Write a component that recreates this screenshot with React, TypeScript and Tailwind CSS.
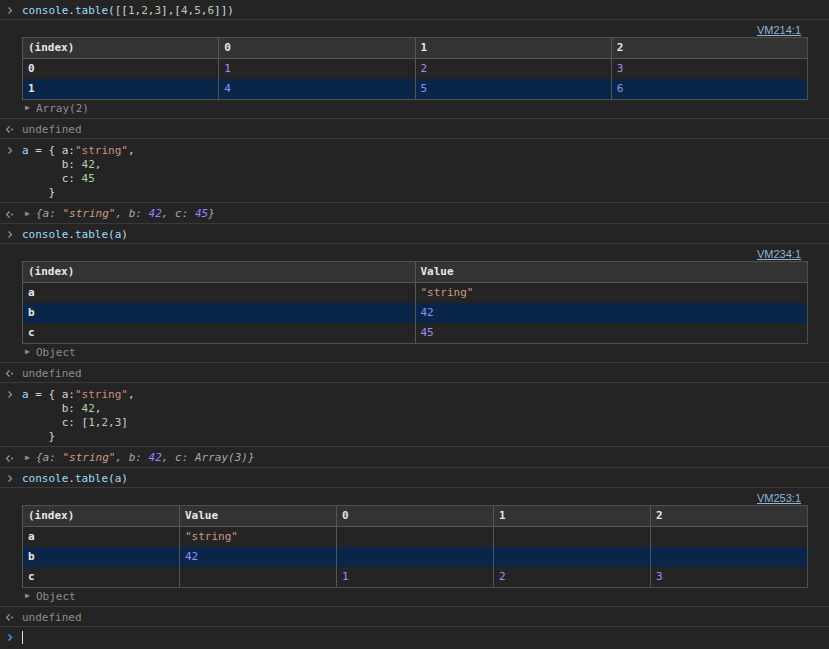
import React from 'react';

const MONO = 'font-["DejaVu_Sans_Mono","Liberation_Mono",monospace]';

// Colours picked off the console screenshot
const C = {
  variable: 'text-[#9cdcfe]',
  plain: 'text-[#d4d4d4]',
  str: 'text-[#ce9178]',
  num: 'text-[#b5cea8]',
  outNum: 'text-[#9d8cf5]',
  outStr: 'text-[#c99a80]',
  key: 'text-[#a8a8a8]',
  muted: 'text-[#8c8c8c]',
};

function InputIcon({ active = false }: { active?: boolean }) {
  return (
    <svg width="22" height="15" viewBox="0 0 22 15" className="shrink-0">
      <path
        d="M8.5 4.5 L11.5 7.5 L8.5 10.5"
        fill="none"
        stroke={active ? '#4a8fe0' : '#9a9a9a'}
        strokeWidth={active ? 1.6 : 1.1}
      />
    </svg>
  );
}

function ResultIcon() {
  return (
    <svg width="22" height="15" viewBox="0 0 22 15" className="shrink-0">
      <path d="M9.5 4.5 L6.5 7.5 L9.5 10.5" fill="none" stroke="#9a9a9a" strokeWidth="1.1" />
      <circle cx="12" cy="7.5" r="0.9" fill="#9a9a9a" />
    </svg>
  );
}

function Entry({
  icon,
  children,
  className = '',
}: {
  icon?: React.ReactNode;
  children: React.ReactNode;
  className?: string;
}) {
  return (
    <div className={`flex border-b border-[#3a3a3a] ${className}`}>
      <div className="w-[22px] shrink-0">{icon}</div>
      <div className="flex-1 min-w-0 pr-[21px]">{children}</div>
    </div>
  );
}

function Line({ icon, children }: { icon: React.ReactNode; children: React.ReactNode }) {
  return (
    <div className="flex items-center">
      <div className="-ml-[22px] w-[22px]">{icon}</div>
      <span>{children}</span>
    </div>
  );
}

function Triangle() {
  return <span className="inline-block text-[#8a8a8a] text-[8px] w-[8px] mr-[3px] relative -top-[1px] not-italic">▶</span>;
}

type Cell = { text: string; kind?: 'num' | 'str' };

function ConsoleTable({ headers, rows }: { headers: string[]; rows: (Cell | null)[][] }) {
  return (
    <table className="w-full table-fixed border-collapse border border-[#4f4f4f] text-[11px]">
      <thead>
        <tr className="bg-[#333333]">
          {headers.map((h, i) => (
            <th
              key={i}
              className="h-[20px] px-[5px] text-left font-bold text-[#e6e6e6] border-l border-b border-[#555555] leading-[20px]"
            >
              {h}
            </th>
          ))}
        </tr>
      </thead>
      <tbody>
        {rows.map((row, r) => (
          <tr key={r} className={r === 1 ? 'bg-[#092648]' : ''}>
            {row.map((cell, i) => (
              <td
                key={i}
                className={`h-[20px] px-[5px] leading-[20px] border-l border-[#555555] ${
                  i === 0
                    ? 'font-bold text-[#e6e6e6]'
                    : cell?.kind === 'str'
                    ? C.outStr
                    : C.outNum
                }`}
              >
                {cell?.text ?? ''}
              </td>
            ))}
          </tr>
        ))}
      </tbody>
    </table>
  );
}

function TableOutput({
  source,
  headers,
  rows,
  summary,
}: {
  source: string;
  headers: string[];
  rows: (Cell | null)[][];
  summary: string;
}) {
  return (
    <Entry className="pt-[3px] pb-[1px]">
      <div className="flex justify-end h-[14px] items-center">
        <span className='font-["Liberation_Sans",Arial,sans-serif] text-[11px] text-[#8fb5da] underline mr-[7px]'>
          {source}
        </span>
      </div>
      <ConsoleTable headers={headers} rows={rows} />
      <div className={`h-[17px] flex items-center pl-[3px] ${C.muted}`}>
        <Triangle />
        {summary}
      </div>
    </Entry>
  );
}

function Undefined() {
  return (
    <Entry className="pt-[3px] pb-[1px]">
      <Line icon={<ResultIcon />}>
        <span className={C.muted}>undefined</span>
      </Line>
    </Entry>
  );
}

function TableCall({ arg }: { arg: React.ReactNode }) {
  return (
    <Entry className="pt-[3px] pb-[1px]">
      <Line icon={<InputIcon />}>
        <span className={C.variable}>console</span>
        <span className={C.plain}>.</span>
        <span className={C.variable}>table</span>
        <span className={C.plain}>(</span>
        {arg}
        <span className={C.plain}>)</span>
      </Line>
    </Entry>
  );
}

function Assignment({ cValue }: { cValue: React.ReactNode }) {
  return (
    <Entry className="pt-[4px] pb-[2px]">
      <div className="leading-[14px] whitespace-pre">
        <Line icon={<InputIcon />}>
          <span className={C.variable}>a</span>
          <span className={C.plain}> = {'{'} </span>
          <span className={C.plain}>a:</span>
          <span className={C.str}>"string"</span>
          <span className={C.plain}>,</span>
        </Line>
        <div>
          <span className={C.plain}>{'      b: '}</span>
          <span className={C.num}>42</span>
          <span className={C.plain}>,</span>
        </div>
        <div>
          <span className={C.plain}>{'      c: '}</span>
          {cValue}
        </div>
        <div className={C.plain}>{'    }'}</div>
      </div>
    </Entry>
  );
}

function Preview({ cValue }: { cValue: React.ReactNode }) {
  return (
    <Entry className="pt-[3px] pb-[1px]">
      <Line icon={<ResultIcon />}>
        <span className="italic pl-[3px]">
          <Triangle />
          <span className={C.key}>{'{a: '}</span>
          <span className={C.outStr}>"string"</span>
          <span className={C.key}>{', b: '}</span>
          <span className="text-[#9980ff]">42</span>
          <span className={C.key}>{', c: '}</span>
          {cValue}
          <span className={C.key}>{'}'}</span>
        </span>
      </Line>
    </Entry>
  );
}

export default function App() {
  const n = (t: string): Cell => ({ text: t, kind: 'num' });
  const s = (t: string): Cell => ({ text: t, kind: 'str' });

  return (
    <div className={`w-[829px] h-[649px] overflow-hidden bg-[#242424] ${MONO} text-[11px] leading-[15px] text-[#d4d4d4]`}>
      <TableCall
        arg={
          <>
            <span className={C.plain}>[[</span>
            <span className={C.num}>1</span>
            <span className={C.plain}>,</span>
            <span className={C.num}>2</span>
            <span className={C.plain}>,</span>
            <span className={C.num}>3</span>
            <span className={C.plain}>],[</span>
            <span className={C.num}>4</span>
            <span className={C.plain}>,</span>
            <span className={C.num}>5</span>
            <span className={C.plain}>,</span>
            <span className={C.num}>6</span>
            <span className={C.plain}>]]</span>
          </>
        }
      />
      <TableOutput
        source="VM214:1"
        headers={['(index)', '0', '1', '2']}
        rows={[
          [{ text: '0' }, n('1'), n('2'), n('3')],
          [{ text: '1' }, n('4'), n('5'), n('6')],
        ]}
        summary="Array(2)"
      />
      <Undefined />
      <Assignment cValue={<span className={C.num}>45</span>} />
      <Preview cValue={<span className="text-[#9980ff]">45</span>} />
      <TableCall arg={<span className={C.variable}>a</span>} />
      <TableOutput
        source="VM234:1"
        headers={['(index)', 'Value']}
        rows={[
          [{ text: 'a' }, s('"string"')],
          [{ text: 'b' }, n('42')],
          [{ text: 'c' }, n('45')],
        ]}
        summary="Object"
      />
      <Undefined />
      <Assignment
        cValue={
          <>
            <span className={C.plain}>[</span>
            <span className={C.num}>1</span>
            <span className={C.plain}>,</span>
            <span className={C.num}>2</span>
            <span className={C.plain}>,</span>
            <span className={C.num}>3</span>
            <span className={C.plain}>]</span>
          </>
        }
      />
      <Preview cValue={<span className={C.key}>Array(3)</span>} />
      <TableCall arg={<span className={C.variable}>a</span>} />
      <TableOutput
        source="VM253:1"
        headers={['(index)', 'Value', '0', '1', '2']}
        rows={[
          [{ text: 'a' }, s('"string"'), null, null, null],
          [{ text: 'b' }, n('42'), null, null, null],
          [{ text: 'c' }, null, n('1'), n('2'), n('3')],
        ]}
        summary="Object"
      />
      <Undefined />
      <div className="flex pt-[3px]">
        <div className="w-[22px]">
          <InputIcon active />
        </div>
        <div className="w-[1px] h-[13px] bg-[#e0e0e0] mt-[1px]" />
      </div>
    </div>
  );
}
